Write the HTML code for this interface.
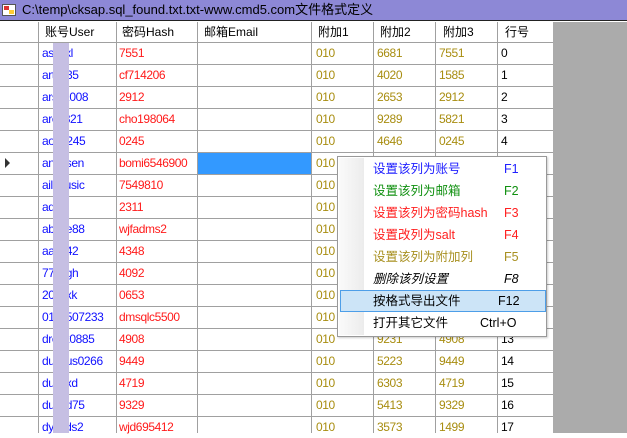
<!DOCTYPE html>
<html><head><meta charset="utf-8"><style>
*{margin:0;padding:0;box-sizing:border-box}
body{width:627px;height:433px;overflow:hidden;position:relative;background:#fff;font-family:"Liberation Sans","Noto Sans CJK SC",sans-serif;font-size:12px}
.title{position:absolute;left:0;top:0;width:627px;height:21px;background:#8d88d6;border-bottom:1px solid #222;color:#000;font-size:13px;line-height:20px;padding-left:22px}
.ico{position:absolute;left:2px;top:4px;width:14px;height:12px;background:#fff;border:1px solid #555}
.ico:before{content:"";position:absolute;left:1px;top:1px;width:5px;height:4px;background:#d33}
.ico:after{content:"";position:absolute;left:6px;top:5px;width:5px;height:4px;background:#fc3}
.grid{position:absolute;left:0;top:22px;width:553px;height:411px;background:repeating-linear-gradient(to bottom,transparent 0,transparent 20px,#a0a0a0 20px,#a0a0a0 21px,transparent 21px,transparent 22px)}
.v{position:absolute;top:22px;width:1px;height:411px;background:#a0a0a0}
.gray{position:absolute;left:553px;top:22px;width:74px;height:411px;background:#ababab}
.row{position:absolute;left:0;width:553px;height:21px;line-height:21px;letter-spacing:-0.4px}
.row span{position:absolute;white-space:nowrap}
.hd{letter-spacing:0}
.u{color:#1010ff;left:42px}.h{color:#ff1a1a;left:119px}.a1{color:#a88d10;left:316px}.a2{color:#a88d10;left:377px}.a3{color:#a88d10;left:439px}.n{color:#000;left:501px}
.hd span{color:#000;font-size:12px}
.red{position:absolute;left:53px;top:43px;width:16px;height:390px;background:#c6bfe3}
.sel{position:absolute;left:198px;top:153px;width:113px;height:21px;background:#3399ff}
.tri{position:absolute;left:5px;top:158px;width:0;height:0;border-top:5px solid transparent;border-bottom:5px solid transparent;border-left:5px solid #333}
.menu{position:absolute;left:337px;top:156px;width:210px;height:181px;background:#fff;border:1px solid #999;box-shadow:1px 1px 2px rgba(0,0,0,.2)}
.strip{position:absolute;left:1px;top:1px;width:25px;height:177px;background:linear-gradient(to right,#fafafa,#ececec)}
.mi{position:absolute;left:0;width:208px;height:22px;line-height:22px;font-size:12.5px}
.mi span{position:absolute}
.mi .t{left:35px}.mi .k{left:166px}
.hl{position:absolute;left:2px;top:133px;width:206px;height:22px;background:#cce4f7;border:1px solid #4d9ee8}
</style></head><body>
<div class="title"><div class="ico"></div>C:\temp\cksap.sql_found.txt.txt-www.cmd5.com文件格式定义</div>
<div class="grid"></div>
<div class="gray"></div>
<div class="v" style="left:38px"></div><div class="v" style="left:116px"></div><div class="v" style="left:197px"></div><div class="v" style="left:311px"></div><div class="v" style="left:373px"></div><div class="v" style="left:435px"></div><div class="v" style="left:497px"></div>
<div class="row hd" style="top:22px"><span style="left:45px">账号User</span><span style="left:122px">密码Hash</span><span style="left:204px">邮箱Email</span><span style="left:318px">附加1</span><span style="left:380px">附加2</span><span style="left:443px">附加3</span><span style="left:505px">行号</span></div>
<div class="sel"></div><div class="tri"></div>
<div class="row" style="top:43px"><span class="u">asxxxl</span><span class="h">7551</span><span class="a1">010</span><span class="a2">6681</span><span class="a3">7551</span><span class="n">0</span></div>
<div class="row" style="top:65px"><span class="u">artxx35</span><span class="h">cf714206</span><span class="a1">010</span><span class="a2">4020</span><span class="a3">1585</span><span class="n">1</span></div>
<div class="row" style="top:87px"><span class="u">arsx2008</span><span class="h">2912</span><span class="a1">010</span><span class="a2">2653</span><span class="a3">2912</span><span class="n">2</span></div>
<div class="row" style="top:109px"><span class="u">arex821</span><span class="h">cho198064</span><span class="a1">010</span><span class="a2">9289</span><span class="a3">5821</span><span class="n">3</span></div>
<div class="row" style="top:131px"><span class="u">aox0245</span><span class="h">0245</span><span class="a1">010</span><span class="a2">4646</span><span class="a3">0245</span><span class="n">4</span></div>
<div class="row" style="top:153px"><span class="u">anxxsen</span><span class="h">bomi6546900</span><span class="a1">010</span></div>
<div class="row" style="top:175px"><span class="u">ailexusic</span><span class="h">7549810</span><span class="a1">010</span></div>
<div class="row" style="top:197px"><span class="u">ad</span><span class="h">2311</span><span class="a1">010</span></div>
<div class="row" style="top:219px"><span class="u">abxxe88</span><span class="h">wjfadms2</span><span class="a1">010</span></div>
<div class="row" style="top:241px"><span class="u">aaxx42</span><span class="h">4348</span><span class="a1">010</span></div>
<div class="row" style="top:263px"><span class="u">77xxgh</span><span class="h">4092</span><span class="a1">010</span></div>
<div class="row" style="top:285px"><span class="u">20xxxk</span><span class="h">0653</span><span class="a1">010</span></div>
<div class="row" style="top:307px"><span class="u">01xx507233</span><span class="h">dmsqlc5500</span><span class="a1">010</span></div>
<div class="row" style="top:329px"><span class="u">drexx0885</span><span class="h">4908</span><span class="a1">010</span><span class="a2">9231</span><span class="a3">4908</span><span class="n">13</span></div>
<div class="row" style="top:351px"><span class="u">duxxus0266</span><span class="h">9449</span><span class="a1">010</span><span class="a2">5223</span><span class="a3">9449</span><span class="n">14</span></div>
<div class="row" style="top:373px"><span class="u">duxxxd</span><span class="h">4719</span><span class="a1">010</span><span class="a2">6303</span><span class="a3">4719</span><span class="n">15</span></div>
<div class="row" style="top:395px"><span class="u">duxxd75</span><span class="h">9329</span><span class="a1">010</span><span class="a2">5413</span><span class="a3">9329</span><span class="n">16</span></div>
<div class="row" style="top:417px"><span class="u">dyxxds2</span><span class="h">wjd695412</span><span class="a1">010</span><span class="a2">3573</span><span class="a3">1499</span><span class="n">17</span></div>
<div class="red"></div>
<div class="menu"><div class="strip"></div><div class="hl"></div>
<div class="mi" style="top:1px;color:#2020ff"><span class="t">设置该列为账号</span><span class="k">F1</span></div>
<div class="mi" style="top:23px;color:#109010"><span class="t">设置该列为邮箱</span><span class="k">F2</span></div>
<div class="mi" style="top:45px;color:#ff2020"><span class="t">设置该列为密码hash</span><span class="k">F3</span></div>
<div class="mi" style="top:67px;color:#ff2020"><span class="t">设置改列为salt</span><span class="k">F4</span></div>
<div class="mi" style="top:89px;color:#a89020"><span class="t">设置该列为附加列</span><span class="k">F5</span></div>
<div class="mi" style="top:111px;color:#000;font-style:italic"><span class="t">删除该列设置</span><span class="k">F8</span></div>
<div class="mi" style="top:133px;color:#000"><span class="t">按格式导出文件</span><span class="k" style="left:160px">F12</span></div>
<div class="mi" style="top:155px;color:#000"><span class="t">打开其它文件</span><span class="k" style="left:142px">Ctrl+O</span></div>
</div>
</body></html>
